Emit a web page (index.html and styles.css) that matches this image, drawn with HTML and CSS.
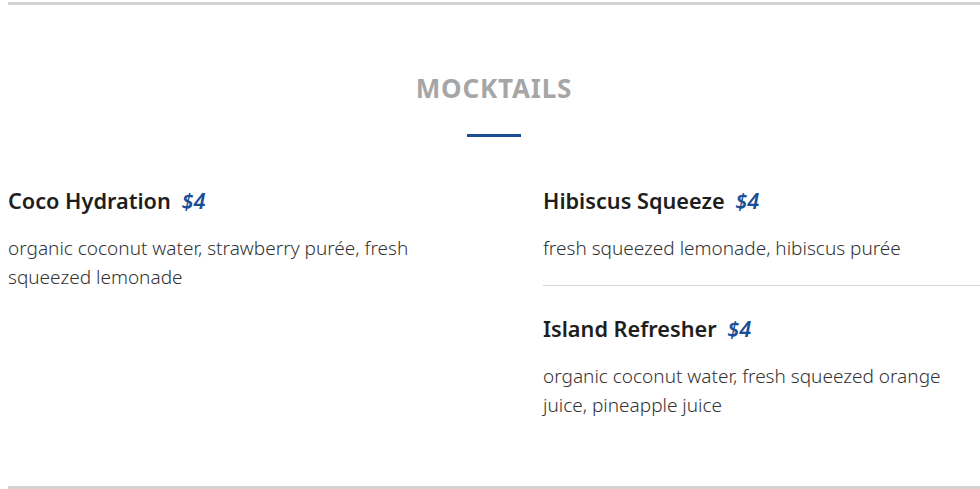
FILE: index.html
```html
<!DOCTYPE html>
<html>
<head>
<meta charset="utf-8">
<link rel="stylesheet" href="styles.css">
</head>
<body>
<section class="menu">
  <h2 class="menu-title">MOCKTAILS</h2>
  <div class="menu-bar"></div>
  <div class="menu-grid">
    <div class="menu-col">
      <div class="item">
        <h3 class="item-name">Coco Hydration <span class="price">$4</span></h3>
        <p class="item-desc">organic coconut water, strawberry purée, fresh squeezed lemonade</p>
      </div>
    </div>
    <div class="menu-col">
      <div class="item item-divided">
        <h3 class="item-name">Hibiscus Squeeze <span class="price">$4</span></h3>
        <p class="item-desc">fresh squeezed lemonade, hibiscus purée</p>
      </div>
      <div class="item item-next">
        <h3 class="item-name">Island Refresher <span class="price">$4</span></h3>
        <p class="item-desc">organic coconut water, fresh squeezed orange juice, pineapple juice</p>
      </div>
    </div>
  </div>
</section>
</body>
</html>
```
FILE: styles.css
```css
html, body {
  margin: 0;
  padding: 0;
  background: #fff;
}
body {
  font-family: "Noto Sans", Lato, sans-serif;
  color: #222;
  padding: 2px 0 0 8px;
}
.menu {
  width: 972px;
  border-top: 3px solid #d3d3d3;
  border-bottom: 3px solid #d3d3d3;
  padding: 68px 0 66px;
  box-sizing: border-box;
  height: 487px;
}
.menu-title {
  margin: 0;
  text-align: center;
  font-size: 26px;
  line-height: 30px;
  font-weight: 700;
  letter-spacing: 0.8px;
  color: #a6a6a6;
}
.menu-bar {
  width: 54px;
  height: 3px;
  background: #1b4e94;
  margin: 31px auto 0;
}
.menu-grid {
  display: grid;
  grid-template-columns: 437px 437px;
  column-gap: 98px;
  margin-top: 50px;
}
.item-name {
  margin: 0;
  font-size: 21.7px;
  line-height: 28px;
  font-weight: 600;
  color: #1e1e1e;
}
.price {
  margin-left: 5px;
  font-style: italic;
  color: #1b4e94;
}
.item-desc {
  margin: 19px 0 0;
  font-size: 19px;
  line-height: 29px;
  font-weight: 300;
  color: #333;
}
.item-divided {
  padding-bottom: 22px;
  border-bottom: 1px solid #d6d6d6;
}
.item-next {
  padding-top: 29px;
}
```
